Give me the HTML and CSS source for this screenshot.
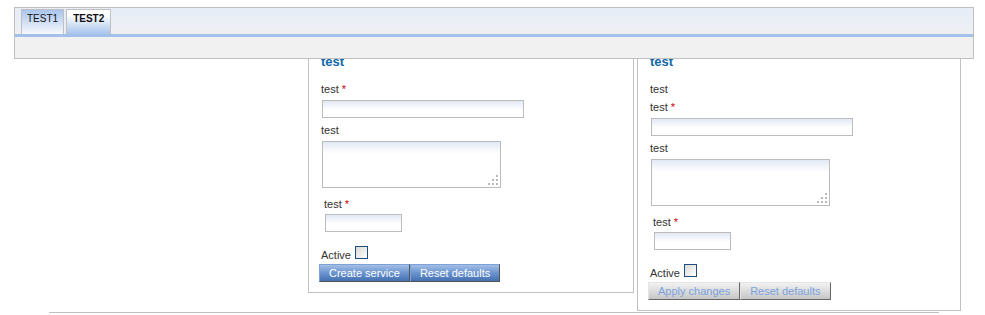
FILE: index.html
```html
<!DOCTYPE html>
<html lang="en">
<head>
  <meta charset="UTF-8" />
  <title>Services</title>
  <link rel="stylesheet" href="styles.css">
</head>
<body>

<div class="tabbar">
  <div class="tab-strip">
    <div class="tab">TEST1</div>
    <div class="tab tab-active">TEST2</div>
  </div>
  <div class="tab-body"></div>
</div>

<div class="page">
  <!-- new service form -->
  <div class="panel panel-left">
    <h2 class="panel-title">test</h2>
    <div class="label">test <span class="req">*</span></div>
    <input class="field field-wide" type="text" />
    <div class="label">test</div>
    <div class="area-wrap">
      <textarea class="area"></textarea>
      <span class="grip"><i></i><i></i><i></i><i></i><i></i><i></i></span>
    </div>
    <div class="group">
      <div class="label label-tight">test <span class="req">*</span></div>
      <input class="field field-short" type="text" />
    </div>
    <div class="active-row">Active <span class="check"></span></div>
    <div class="buttons">
      <button class="btn">Create service</button>
      <button class="btn">Reset defaults</button>
    </div>
  </div>

  <!-- edit service form -->
  <div class="panel panel-right">
    <h2 class="panel-title">test</h2>
    <div class="label">test</div>
    <div class="label">test <span class="req">*</span></div>
    <input class="field field-wide" type="text" />
    <div class="label">test</div>
    <div class="area-wrap">
      <textarea class="area"></textarea>
      <span class="grip"><i></i><i></i><i></i><i></i><i></i><i></i></span>
    </div>
    <div class="group">
      <div class="label label-tight">test <span class="req">*</span></div>
      <input class="field field-short" type="text" />
    </div>
    <div class="active-row">Active <span class="check"></span></div>
    <div class="buttons">
      <button class="btn btn-off">Apply changes</button>
      <button class="btn btn-off">Reset defaults</button>
    </div>
  </div>
</div>

</body>
</html>
```

FILE: styles.css
```css
body {
  margin: 0;
  font-family: "Liberation Sans", Arial, sans-serif;
  font-size: 11px;
  color: #333;
  background: #fff;
}

/* Tab bar floating over the page */
.tabbar {
  position: absolute;
  top: 7px;
  left: 14px;
  width: 960px;
  box-sizing: border-box;
  border: 1px solid #c0c0c0;
  z-index: 10;
}

.tab-strip {
  display: flex;
  align-items: flex-end;
  gap: 2px;
  height: 29px;
  box-sizing: border-box;
  padding: 1px 0 0 6px;
  background: linear-gradient(#e6edf8, #eeeff2);
  border-bottom: 3px solid #a3c0ea;
}

.tab {
  box-sizing: border-box;
  height: 25px;
  padding: 3px 5px 0;
  line-height: 12px;
  font-size: 10px;
  color: #111;
  border: 1px solid #c0c0c0;
  border-bottom: none;
  background: linear-gradient(#a9c5ed, #f6f8fc);
}

.tab-active {
  font-weight: bold;
  padding: 3px 6px 0;
  background: linear-gradient(#ffffff 20%, #a9c5ed);
}

.tab-body {
  height: 21px;
  background: #f1f1f1;
}

/* Page with the two forms */
.page {
  display: flex;
  align-items: flex-start;
  gap: 3px;
  width: 890px;
  box-sizing: border-box;
  margin-left: 49px;
  padding: 44px 0 1px 259px;
  border-bottom: 1px solid #c0c0c0;
}

.panel {
  flex-shrink: 0;
  box-sizing: border-box;
  border: 1px solid #c0c0c0;
  padding: 9px 12px 10px;
}

.panel-left {
  width: 326px;
}

.panel-right {
  width: 324px;
}

.panel-title {
  margin: 0 0 12px;
  font-size: 13px;
  line-height: 16px;
  font-weight: bold;
  color: #1068a8;
}

.label {
  line-height: 14px;
  margin-bottom: 4px;
}

.label-tight {
  margin-bottom: 3px;
}

.req {
  color: #cc0000;
}

.field {
  display: block;
  box-sizing: border-box;
  height: 18px;
  margin: 0 0 5px 1px;
  padding: 0 3px;
  border: 1px solid #bcbcbc;
  background: linear-gradient(#e2e9f4, #ffffff 9px);
  font: inherit;
}

.field-wide {
  width: 202px;
}

.field-short {
  width: 77px;
  margin-bottom: 14px;
}

.area-wrap {
  position: relative;
  width: 179px;
  height: 47px;
  margin: 0 0 9px 1px;
}

.area {
  display: block;
  box-sizing: border-box;
  width: 100%;
  height: 100%;
  margin: 0;
  resize: none;
  border: 1px solid #bcbcbc;
  background: linear-gradient(#e2e9f4, #ffffff 12px);
  font: inherit;
}

/* resize grip dots */
.grip {
  position: absolute;
  right: 3px;
  bottom: 3px;
  width: 10px;
  height: 10px;
}

.grip i {
  position: absolute;
  width: 2px;
  height: 2px;
  background: #b8b8b8;
}

.grip i:nth-child(1) { right: 0; top: 0; }
.grip i:nth-child(2) { right: 0; top: 4px; }
.grip i:nth-child(3) { right: 4px; top: 4px; }
.grip i:nth-child(4) { right: 0; top: 8px; }
.grip i:nth-child(5) { right: 4px; top: 8px; }
.grip i:nth-child(6) { right: 8px; top: 8px; }

.group {
  padding-left: 3px;
}

.active-row {
  line-height: 14px;
}

.check {
  display: inline-block;
  box-sizing: border-box;
  width: 13px;
  height: 13px;
  margin-left: 1px;
  border: 1px solid #1f4e7c;
  background: linear-gradient(135deg, #d8d8d4, #ffffff);
  vertical-align: baseline;
}

.buttons {
  display: flex;
  margin: 2px 0 0 -2px;
}

.btn {
  box-sizing: border-box;
  height: 18px;
  padding: 0 9px;
  margin: 0;
  font: inherit;
  line-height: 16px;
  color: #fff;
  border: 1px solid;
  border-color: #7ea2d6 #555 #555 #7ea2d6;
  background: linear-gradient(#a3bee7, #6a94cf 50%, #4570b1);
  cursor: pointer;
}

.btn-off {
  color: #7ba2dc;
  border-color: #e4e4e4 #666 #666 #e4e4e4;
  background: linear-gradient(#f2f2f2, #dcdcdc 50%, #c6c6c6);
  cursor: default;
}
```
